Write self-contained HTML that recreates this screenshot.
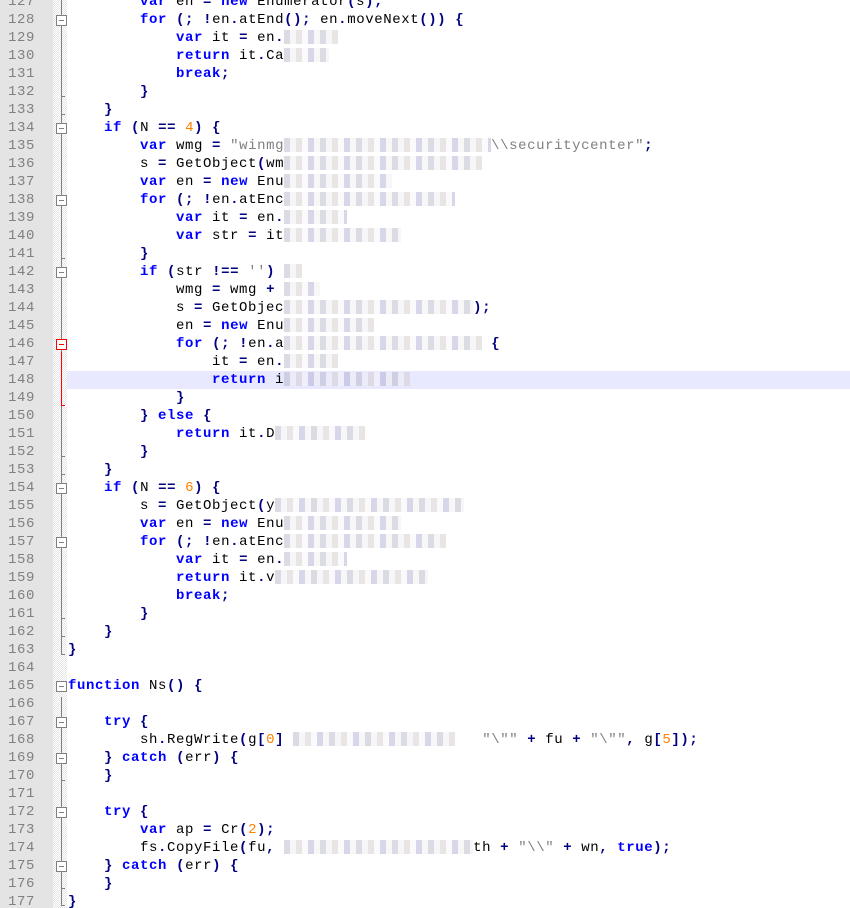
<!DOCTYPE html>
<html><head><meta charset="utf-8"><style>
html,body{margin:0;padding:0;background:#fff;width:850px;height:908px;overflow:hidden;position:relative}
.g{position:absolute;left:0;top:0;width:53px;height:908px;background:#e4e4e4}
.f{position:absolute;left:53px;top:0;width:14px;height:908px;background-color:#f4f4f4;background-image:repeating-conic-gradient(#fff 0 25%,#e6e6e6 0 50%);background-size:2px 2px}
.hl{position:absolute;left:67px;top:371px;width:783px;height:18px;background:#e8e8ff}
.l{position:absolute;left:0;height:18px;line-height:19px;font-family:"Liberation Mono","Courier New",monospace;font-size:14px;letter-spacing:0.6px;white-space:pre}
.n{width:35px;text-align:right;color:#808080}
.c{left:68px;color:#000}
.k{color:#0000ff;font-weight:bold}
.o{color:#000080;font-weight:bold}
.u{color:#ff8000}
.s{color:#808080}
.b{display:inline-block;height:14px;vertical-align:middle;opacity:.5;background:repeating-linear-gradient(90deg,#b8b8c8 0 6px,#eeeef4 6px 12px,#d4cccc 12px 18px,#f6f6fa 18px 24px,#b0b0d4 24px 30px,#f0f0f0 30px 36px)}
.vl{position:absolute;left:61px;width:1px;background:#808080}
.vr{position:absolute;left:61px;width:1px;background:#ff0000}
.bx{position:absolute;left:56px;width:9px;height:9px;border:1px solid #808080;background:#fff}
.bx:after{content:"";position:absolute;left:2px;top:4px;width:5px;height:1px;background:#808080}
.bx.r{border-color:#f00}.bx.r:after{background:#f00}
.t{position:absolute;left:61px;width:4px;height:1px;background:#808080}
</style></head><body>
<div class="g"></div><div class="f"></div><div class="hl"></div>
<div class="vl" style="top:0;height:655px"></div>
<div class="vl" style="top:697px;height:208px"></div>
<div class="vr" style="top:352px;height:53px"></div>
<div class="t" style="top:96px"></div><div class="t" style="top:114px"></div>
<div class="t" style="top:258px"></div><div class="t" style="top:405px;background:#f00"></div>
<div class="t" style="top:456px"></div><div class="t" style="top:474px"></div>
<div class="t" style="top:618px"></div><div class="t" style="top:636px"></div>
<div class="t" style="top:654px"></div>
<div class="t" style="top:780px"></div><div class="t" style="top:888px"></div><div class="t" style="top:905px"></div>
<div class="bx" style="top:15px"></div><div class="bx" style="top:123px"></div>
<div class="bx" style="top:195px"></div><div class="bx" style="top:267px"></div>
<div class="bx r" style="top:339px"></div><div class="bx" style="top:483px"></div>
<div class="bx" style="top:537px"></div><div class="bx" style="top:681px"></div>
<div class="bx" style="top:717px"></div><div class="bx" style="top:753px"></div>
<div class="bx" style="top:807px"></div><div class="bx" style="top:861px"></div>

<div class="l n" style="top:-7px">127</div><div class="l c" style="top:-7px">        <span class="k">var</span> en <span class="o">=</span> <span class="k">new</span> Enumerator<span class="o">(</span>s<span class="o">);</span></div>
<div class="l n" style="top:11px">128</div><div class="l c" style="top:11px">        <span class="k">for</span> <span class="o">(;</span> <span class="o">!</span>en<span class="o">.</span>atEnd<span class="o">();</span> en<span class="o">.</span>moveNext<span class="o">())</span> <span class="o">{</span></div>
<div class="l n" style="top:29px">129</div><div class="l c" style="top:29px">            <span class="k">var</span> it <span class="o">=</span> en<span class="o">.</span><span class="b">      </span></div>
<div class="l n" style="top:47px">130</div><div class="l c" style="top:47px">            <span class="k">return</span> it<span class="o">.</span>Ca<span class="b">     </span></div>
<div class="l n" style="top:65px">131</div><div class="l c" style="top:65px">            <span class="k">break</span><span class="o">;</span></div>
<div class="l n" style="top:83px">132</div><div class="l c" style="top:83px">        <span class="o">}</span></div>
<div class="l n" style="top:101px">133</div><div class="l c" style="top:101px">    <span class="o">}</span></div>
<div class="l n" style="top:119px">134</div><div class="l c" style="top:119px">    <span class="k">if</span> <span class="o">(</span>N <span class="o">==</span> <span class="u">4</span><span class="o">)</span> <span class="o">{</span></div>
<div class="l n" style="top:137px">135</div><div class="l c" style="top:137px">        <span class="k">var</span> wmg <span class="o">=</span> <span class="s">"winmg</span><span class="b">                       </span><span class="s">\\securitycenter"</span><span class="o">;</span></div>
<div class="l n" style="top:155px">136</div><div class="l c" style="top:155px">        s <span class="o">=</span> GetObject<span class="o">(</span>wm<span class="b">                      </span></div>
<div class="l n" style="top:173px">137</div><div class="l c" style="top:173px">        <span class="k">var</span> en <span class="o">=</span> <span class="k">new</span> Enu<span class="b">            </span></div>
<div class="l n" style="top:191px">138</div><div class="l c" style="top:191px">        <span class="k">for</span> <span class="o">(;</span> <span class="o">!</span>en<span class="o">.</span>atEnc<span class="b">                   </span></div>
<div class="l n" style="top:209px">139</div><div class="l c" style="top:209px">            <span class="k">var</span> it <span class="o">=</span> en<span class="o">.</span><span class="b">       </span></div>
<div class="l n" style="top:227px">140</div><div class="l c" style="top:227px">            <span class="k">var</span> str <span class="o">=</span> it<span class="b">             </span></div>
<div class="l n" style="top:245px">141</div><div class="l c" style="top:245px">        <span class="o">}</span></div>
<div class="l n" style="top:263px">142</div><div class="l c" style="top:263px">        <span class="k">if</span> <span class="o">(</span>str <span class="o">!==</span> <span class="s">''</span><span class="o">)</span> <span class="b">  </span></div>
<div class="l n" style="top:281px">143</div><div class="l c" style="top:281px">            wmg <span class="o">=</span> wmg <span class="o">+</span> <span class="b">    </span></div>
<div class="l n" style="top:299px">144</div><div class="l c" style="top:299px">            s <span class="o">=</span> GetObjec<span class="b">                     </span><span class="o">);</span></div>
<div class="l n" style="top:317px">145</div><div class="l c" style="top:317px">            en <span class="o">=</span> <span class="k">new</span> Enu<span class="b">          </span></div>
<div class="l n" style="top:335px">146</div><div class="l c" style="top:335px">            <span class="k">for</span> <span class="o">(;</span> <span class="o">!</span>en<span class="o">.</span>a<span class="b">                      </span> <span class="o">{</span></div>
<div class="l n" style="top:353px">147</div><div class="l c" style="top:353px">                it <span class="o">=</span> en<span class="o">.</span><span class="b">      </span></div>
<div class="l n" style="top:371px">148</div><div class="l c" style="top:371px">                <span class="k">return</span> i<span class="b">              </span></div>
<div class="l n" style="top:389px">149</div><div class="l c" style="top:389px">            <span class="o">}</span></div>
<div class="l n" style="top:407px">150</div><div class="l c" style="top:407px">        <span class="o">}</span> <span class="k">else</span> <span class="o">{</span></div>
<div class="l n" style="top:425px">151</div><div class="l c" style="top:425px">            <span class="k">return</span> it<span class="o">.</span>D<span class="b">          </span></div>
<div class="l n" style="top:443px">152</div><div class="l c" style="top:443px">        <span class="o">}</span></div>
<div class="l n" style="top:461px">153</div><div class="l c" style="top:461px">    <span class="o">}</span></div>
<div class="l n" style="top:479px">154</div><div class="l c" style="top:479px">    <span class="k">if</span> <span class="o">(</span>N <span class="o">==</span> <span class="u">6</span><span class="o">)</span> <span class="o">{</span></div>
<div class="l n" style="top:497px">155</div><div class="l c" style="top:497px">        s <span class="o">=</span> GetObject<span class="o">(</span>y<span class="b">                     </span></div>
<div class="l n" style="top:515px">156</div><div class="l c" style="top:515px">        <span class="k">var</span> en <span class="o">=</span> <span class="k">new</span> Enu<span class="b">             </span></div>
<div class="l n" style="top:533px">157</div><div class="l c" style="top:533px">        <span class="k">for</span> <span class="o">(;</span> <span class="o">!</span>en<span class="o">.</span>atEnc<span class="b">                  </span></div>
<div class="l n" style="top:551px">158</div><div class="l c" style="top:551px">            <span class="k">var</span> it <span class="o">=</span> en<span class="o">.</span><span class="b">       </span></div>
<div class="l n" style="top:569px">159</div><div class="l c" style="top:569px">            <span class="k">return</span> it<span class="o">.</span>v<span class="b">                 </span></div>
<div class="l n" style="top:587px">160</div><div class="l c" style="top:587px">            <span class="k">break</span><span class="o">;</span></div>
<div class="l n" style="top:605px">161</div><div class="l c" style="top:605px">        <span class="o">}</span></div>
<div class="l n" style="top:623px">162</div><div class="l c" style="top:623px">    <span class="o">}</span></div>
<div class="l n" style="top:641px">163</div><div class="l c" style="top:641px"><span class="o">}</span></div>
<div class="l n" style="top:659px">164</div>
<div class="l n" style="top:677px">165</div><div class="l c" style="top:677px"><span class="k">function</span> Ns<span class="o">()</span> <span class="o">{</span></div>
<div class="l n" style="top:695px">166</div>
<div class="l n" style="top:713px">167</div><div class="l c" style="top:713px">    <span class="k">try</span> <span class="o">{</span></div>
<div class="l n" style="top:731px">168</div><div class="l c" style="top:731px">        sh<span class="o">.</span>RegWrite<span class="o">(</span>g<span class="o">[</span><span class="u">0</span><span class="o">]</span> <span class="b">                  </span>   <span class="s">"\""</span> <span class="o">+</span> fu <span class="o">+</span> <span class="s">"\""</span><span class="o">,</span> g<span class="o">[</span><span class="u">5</span><span class="o">]);</span></div>
<div class="l n" style="top:749px">169</div><div class="l c" style="top:749px">    <span class="o">}</span> <span class="k">catch</span> <span class="o">(</span>err<span class="o">)</span> <span class="o">{</span></div>
<div class="l n" style="top:767px">170</div><div class="l c" style="top:767px">    <span class="o">}</span></div>
<div class="l n" style="top:785px">171</div>
<div class="l n" style="top:803px">172</div><div class="l c" style="top:803px">    <span class="k">try</span> <span class="o">{</span></div>
<div class="l n" style="top:821px">173</div><div class="l c" style="top:821px">        <span class="k">var</span> ap <span class="o">=</span> Cr<span class="o">(</span><span class="u">2</span><span class="o">);</span></div>
<div class="l n" style="top:839px">174</div><div class="l c" style="top:839px">        fs<span class="o">.</span>CopyFile<span class="o">(</span>fu<span class="o">,</span> <span class="b">                     </span>th <span class="o">+</span> <span class="s">"\\"</span> <span class="o">+</span> wn<span class="o">,</span> <span class="k">true</span><span class="o">);</span></div>
<div class="l n" style="top:857px">175</div><div class="l c" style="top:857px">    <span class="o">}</span> <span class="k">catch</span> <span class="o">(</span>err<span class="o">)</span> <span class="o">{</span></div>
<div class="l n" style="top:875px">176</div><div class="l c" style="top:875px">    <span class="o">}</span></div>
<div class="l n" style="top:893px">177</div><div class="l c" style="top:893px"><span class="o">}</span></div>
</body></html>
